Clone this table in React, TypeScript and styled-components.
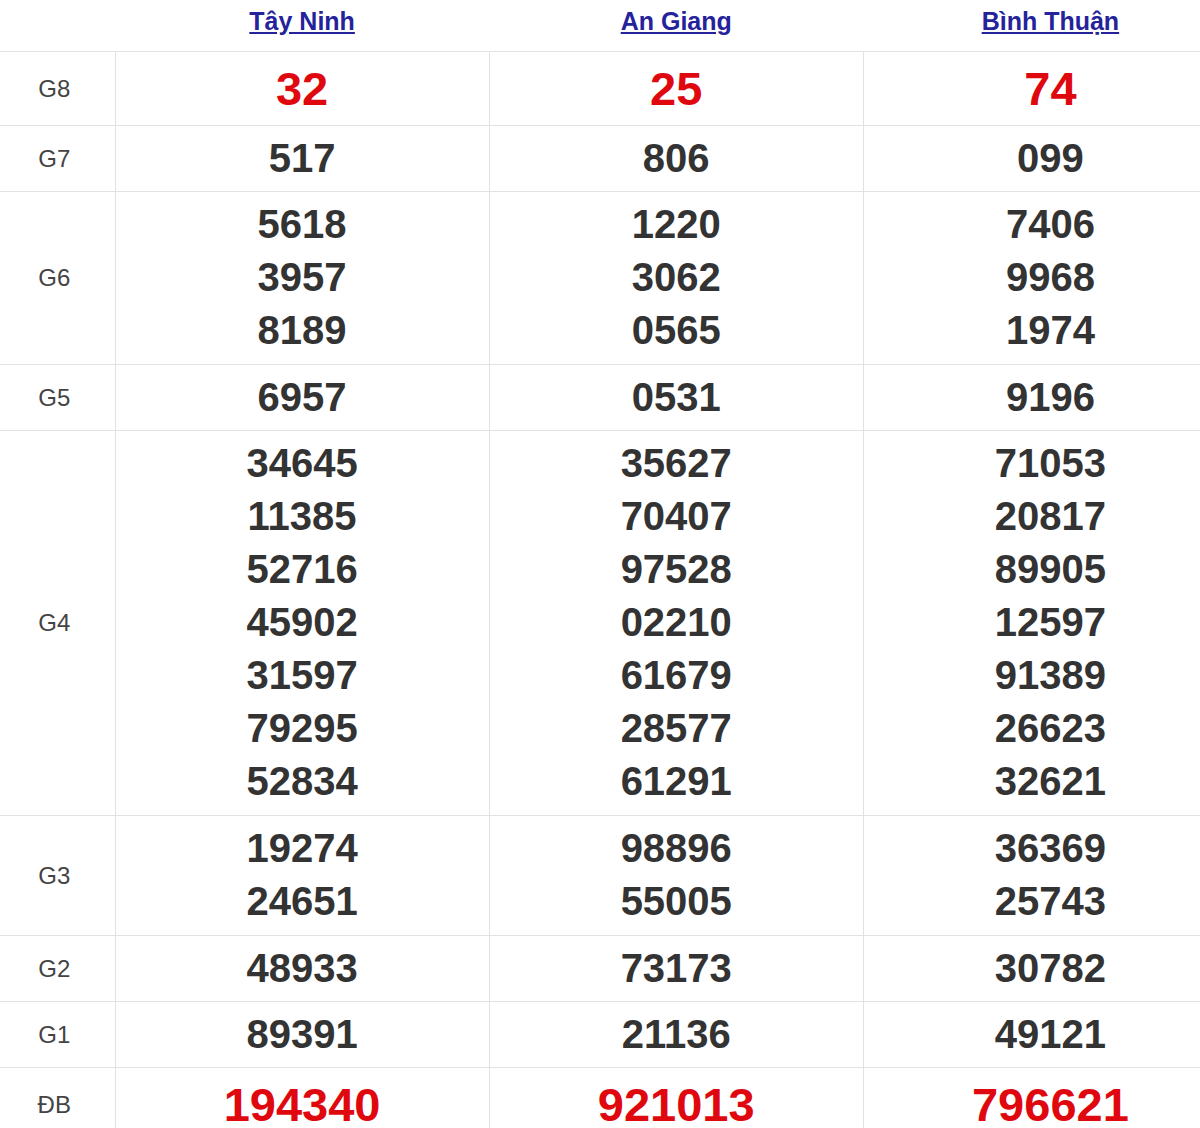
import React from "react";
import styled, { createGlobalStyle } from "styled-components";

const GlobalStyle = createGlobalStyle`
  html, body {
    margin: 0;
    padding: 0;
    background: #ffffff;
    overflow: hidden;
  }

  body {
    font-family: "Liberation Sans", Arial, sans-serif;
  }
`;

type Prize = {
  label: string;
  values: string[][];
  big?: boolean;
};

const provinces = ["Tây Ninh", "An Giang", "Bình Thuận"];

const prizes: Prize[] = [
  { label: "G8", values: [["32"], ["25"], ["74"]], big: true },
  { label: "G7", values: [["517"], ["806"], ["099"]] },
  {
    label: "G6",
    values: [
      ["5618", "3957", "8189"],
      ["1220", "3062", "0565"],
      ["7406", "9968", "1974"],
    ],
  },
  { label: "G5", values: [["6957"], ["0531"], ["9196"]] },
  {
    label: "G4",
    values: [
      ["34645", "11385", "52716", "45902", "31597", "79295", "52834"],
      ["35627", "70407", "97528", "02210", "61679", "28577", "61291"],
      ["71053", "20817", "89905", "12597", "91389", "26623", "32621"],
    ],
  },
  {
    label: "G3",
    values: [
      ["19274", "24651"],
      ["98896", "55005"],
      ["36369", "25743"],
    ],
  },
  { label: "G2", values: [["48933"], ["73173"], ["30782"]] },
  { label: "G1", values: [["89391"], ["21136"], ["49121"]] },
  { label: "ĐB", values: [["194340"], ["921013"], ["796621"]], big: true },
];

export default function App() {
  return (
    <>
      <GlobalStyle />
      <ResultTable>
        <colgroup>
          <LabelCol />
          {provinces.map((name) => (
            <DataCol key={name} />
          ))}
        </colgroup>
        <thead>
          <tr>
            <HeadCell />
            {provinces.map((name) => (
              <HeadCell key={name}>
                <ProvinceLink href="#">{name}</ProvinceLink>
              </HeadCell>
            ))}
          </tr>
        </thead>
        <tbody>
          {prizes.map((prize) => (
            <tr key={prize.label}>
              <LabelCell>{prize.label}</LabelCell>
              {prize.values.map((nums, i) => (
                <NumberCell
                  key={i}
                  $big={prize.big}
                  $multi={nums.length > 1}
                >
                  {nums.map((n) => (
                    <Number key={n}>{n}</Number>
                  ))}
                </NumberCell>
              ))}
            </tr>
          ))}
        </tbody>
      </ResultTable>
    </>
  );
}

const ResultTable = styled.table`
  width: 1238px;
  table-layout: fixed;
  border-collapse: collapse;
  border-spacing: 0;
`;

const LabelCol = styled.col`
  width: 115px;
`;

const DataCol = styled.col`
  width: 374px;
`;

const HeadCell = styled.th`
  height: 41px;
  padding: 0 0 10px;
  border-bottom: 1px solid #e2e2e2;
  text-align: center;
  vertical-align: middle;
`;

const ProvinceLink = styled.a`
  font-size: 25px;
  font-weight: 700;
  line-height: 30px;
  color: #25239c;
  text-decoration: underline;
  text-underline-offset: 2px;
`;

const LabelCell = styled.td`
  padding: 0 6px 0 0;
  border-bottom: 1px solid #e2e2e2;
  border-right: 1px solid #e2e2e2;
  font-size: 24px;
  color: #444444;
  text-align: center;
  vertical-align: middle;
`;

const NumberCell = styled.td<{ $big?: boolean; $multi?: boolean }>`
  padding: 6px 0 ${(p) => (p.$multi ? "7px" : "6px")};
  border-bottom: 1px solid #e2e2e2;
  border-right: 1px solid #e2e2e2;
  text-align: center;
  vertical-align: middle;
  font-weight: 700;
  font-size: ${(p) => (p.$big ? "47px" : "40px")};
  line-height: ${(p) => (p.$big ? "61px" : "53px")};
  color: ${(p) => (p.$big ? "#e0080f" : "#333333")};
`;

const Number = styled.div`
  display: block;
`;
